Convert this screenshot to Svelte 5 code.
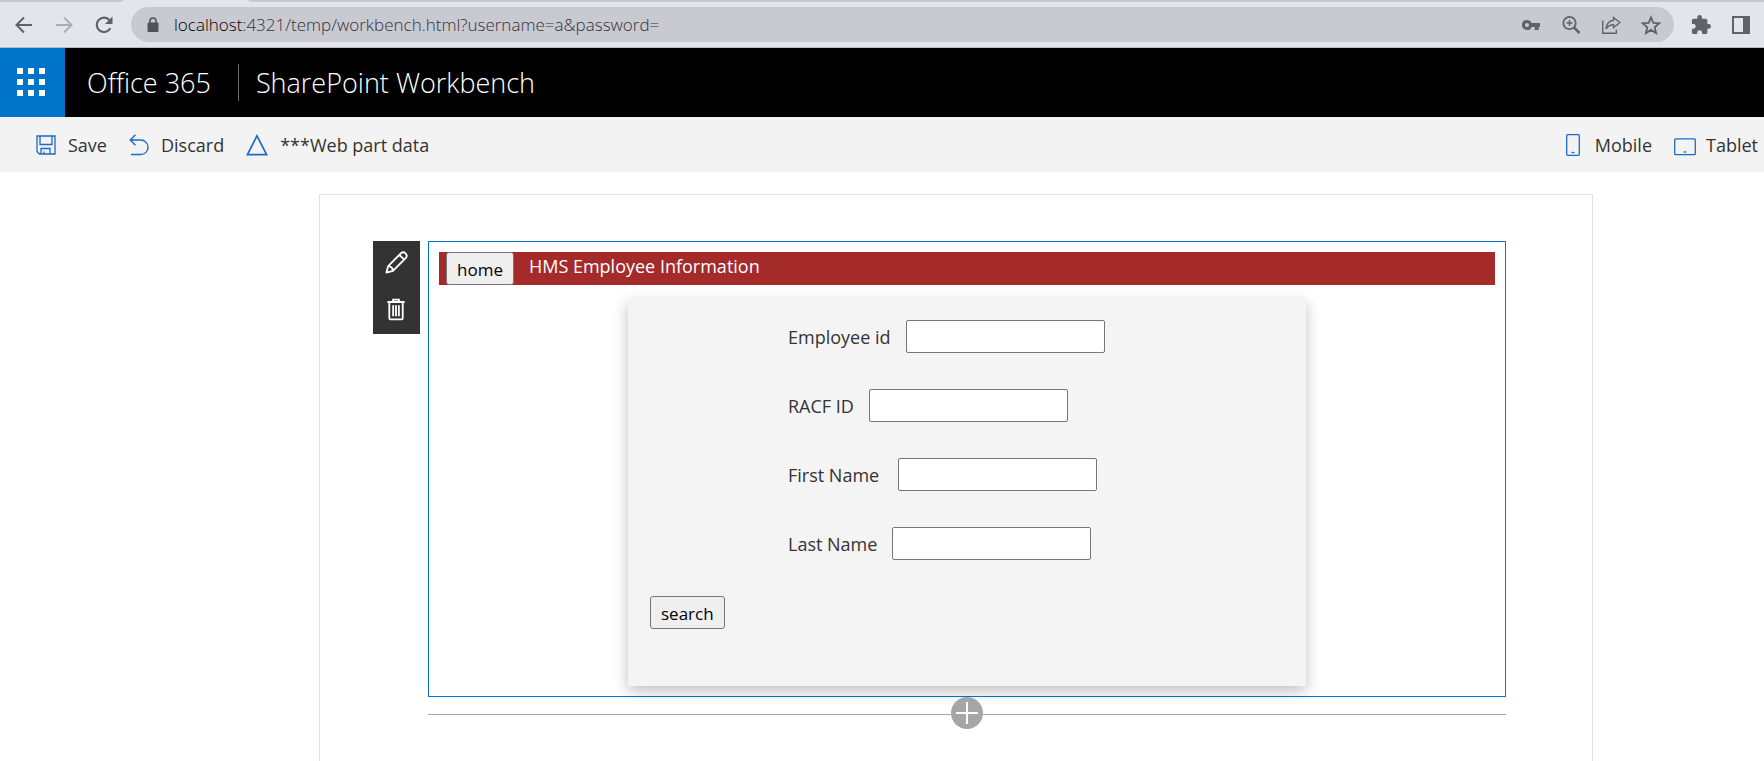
<script>
  const fields = [
    { id: 'employee', label: 'Employee id', wide: false },
    { id: 'racf', label: 'RACF ID', wide: false },
    { id: 'first', label: 'First Name', wide: true },
    { id: 'last', label: 'Last Name', wide: false }
  ];
  const dots = [0, 1, 2, 3, 4, 5, 6, 7, 8];
</script>

<div class="page">
  <div class="browser">
    <div class="tabs"><span class="tab left"></span><span class="tab right"></span></div>
    <div class="nav">
      <button class="icon" aria-label="Back">
        <svg width="20" height="20" viewBox="0 0 20 20" fill="none" stroke="#5f6368" stroke-width="2"><path d="M18 10H3M10 2.5L2.5 10l7.500 7.500" /></svg>
      </button>
      <button class="icon" aria-label="Forward">
        <svg width="20" height="20" viewBox="0 0 20 20" fill="none" stroke="#acacb2" stroke-width="2"><path d="M2 10h15M10 2.500l7.500 7.500-7.500 7.500" /></svg>
      </button>
      <button class="icon" aria-label="Reload">
        <svg width="20" height="20" viewBox="0 0 20 20" fill="none"><path d="M16.300 13.200A7.200 7.200 0 1 1 15.500 5.200" stroke="#5f6368" stroke-width="2.200" /><path d="M18.500 1.500V9H11z" fill="#5f6368" /></svg>
      </button>
      <div class="address">
        <svg width="12" height="16" viewBox="0 0 12 16"><rect x="0.500" y="5.500" width="11" height="9.500" rx="1.200" fill="#505357" /><path d="M3 6V4a3 3 0 0 1 6 0v2" fill="none" stroke="#505357" stroke-width="1.600" /></svg>
        <span class="url"><b>localhost</b>:4321/temp/workbench.html?username=a&amp;password=</span>
        <button class="icon" aria-label="Passwords">
          <svg width="20" height="20" viewBox="0 0 20 20"><path fill="#5f6368" fill-rule="evenodd" d="M6 5a5 5 0 0 1 4.600 3.100H19v3.800h-1.300v3h-4v-3h-3.100A5 5 0 1 1 6 5zm0 3a2 2 0 1 0 0 4 2 2 0 0 0 0-4z" /></svg>
        </button>
        <button class="icon" aria-label="Zoom">
          <svg width="20" height="20" viewBox="0 0 20 20" fill="none" stroke="#5f6368"><circle cx="8.500" cy="8" r="6.200" stroke-width="1.800" /><path d="M5.500 8h6M8.500 5v6" stroke-width="1.500" /><path d="M13 12.500l5.500 5.500" stroke-width="2.500" /></svg>
        </button>
        <button class="icon" aria-label="Share">
          <svg width="20" height="20" viewBox="0 0 20 20" fill="none" stroke="#5f6368" stroke-width="1.400"><path d="M1.700 5.500v12.800h13.600v-3.500" /><path d="M12.500 2.500l6.500 5-6.500 5V9.700C8.500 9.700 6.500 11.500 5 14c.3-4.500 2.800-8 7.500-8.700z" /></svg>
        </button>
        <button class="icon" aria-label="Bookmark">
          <svg width="20" height="20" viewBox="0 0 20 20" fill="none" stroke="#5f6368" stroke-width="1.800"><path d="M10 2.300l2.300 5.500 5.900.5-4.500 3.900 1.400 5.800-5.100-3.100-5.100 3.100 1.400-5.800-4.500-3.900 5.900-.5z" /></svg>
        </button>
      </div>
      <button class="icon" aria-label="Extensions">
        <svg width="20" height="20" viewBox="1 1 22 22"><path fill="#5f6368" d="M20.500 11H19V7c0-1.100-.9-2-2-2h-4V3.500a2.500 2.500 0 0 0-5 0V5H4c-1.100 0-2 .9-2 2v3.800h1.500a2.700 2.700 0 0 1 0 5.400H2V20c0 1.100.9 2 2 2h3.800v-1.500a2.700 2.700 0 0 1 5.400 0V22H17c1.100 0 2-.9 2-2v-4h1.500a2.500 2.500 0 0 0 0-5z" /></svg>
      </button>
      <button class="icon" aria-label="Side panel">
        <svg width="20" height="20" viewBox="0 0 20 20"><path fill="#5f6368" fill-rule="evenodd" d="M1 1h18v18H1zM3 3v14h9V3z" /></svg>
      </button>
    </div>
  </div>

  <header class="suite">
    <button class="waffle" aria-label="App launcher">
      {#each dots as d (d)}<i></i>{/each}
    </button>
    <span class="brand">Office 365</span>
    <span class="product">SharePoint Workbench</span>
  </header>

  <div class="commands">
    <button>
      <svg width="20" height="20" viewBox="0 0 20 20" fill="none" stroke="#1e6ac4" stroke-width="1.300"><path d="M1 1h18v18H3.500L1 16.500zM4 1v8.500h12V1M5 19v-5.500h9V19M8 19v-2.500" /></svg>
      <span>Save</span>
    </button>
    <button>
      <svg width="20" height="22" viewBox="0 0 20 22" fill="none" stroke="#1e6ac4" stroke-width="1.400"><path d="M6.500 .7L1.200 6 6.500 11.300M1.200 6h10.600a7.200 7.200 0 0 1 0 14.500H2" /></svg>
      <span>Discard</span>
    </button>
    <button>
      <svg width="22" height="22" viewBox="0 0 22 22" fill="none" stroke="#1e6ac4" stroke-width="1.700"><path d="M11 1.800L20.600 20.700H1.400z" /></svg>
      <span>***Web part data</span>
    </button>
    <button class="mobile">
      <svg width="14" height="22" viewBox="0 0 14 22" fill="none" stroke="#1e6ac4" stroke-width="1.300"><rect x="0.700" y="0.700" width="12.600" height="20.600" rx="1" /><path d="M5.500 18.500h3" /></svg>
      <span>Mobile</span>
    </button>
    <button class="tablet">
      <svg width="22" height="22" viewBox="0 0 22 22" fill="none" stroke="#1e6ac4" stroke-width="1.300"><rect x="0.700" y="4.900" width="20.600" height="15.800" rx="1" /><path d="M9.500 18h3" /></svg>
      <span>Tablet</span>
    </button>
  </div>

  <main class="canvas">
    <div class="tools">
      <button aria-label="Edit web part">
        <svg width="23" height="23" viewBox="0 0 24 24" fill="none" stroke="#fff" stroke-width="1.900" stroke-linejoin="round"><path d="M1.500 22.500l1.800-6.800L16.800 2.200a3 3 0 0 1 4.300 0l.7.700a3 3 0 0 1 0 4.300L8.300 20.700zM3.300 15.700c2.600 0 5 2.400 5 5M15 4l5 5" /></svg>
      </button>
      <button aria-label="Delete web part">
        <svg width="23" height="23" viewBox="0 0 24 24" fill="none" stroke="#fff" stroke-width="1.900"><path d="M2.500 4.200h18M8.500 4.200v-2.500h6v2.500M4.500 4.200v16.600c0 .8.500 1.500 1.300 1.500h11.400c.8 0 1.300-.7 1.300-1.500V4.200M8.500 7.500v11.500M11.500 7.500v11.500M14.500 7.500v11.500" /></svg>
      </button>
    </div>
    <div class="zone">
      <section class="webpart">
        <div class="titlebar">
          <button class="plain">home</button>
          <h1>HMS Employee Information</h1>
        </div>
        <form class="card" onsubmit={(e) => e.preventDefault()}>
          {#each fields as f (f.id)}
            <div class="field">
              <label for={f.id} class:wide={f.wide}>{f.label}</label>
              <input id={f.id} type="text" />
            </div>
          {/each}
          <button class="plain">search</button>
        </form>
      </section>
      <div class="add">
        <button aria-label="Add a new web part">
          <svg width="22" height="22" viewBox="0 0 22 22" stroke="#fff" stroke-width="2"><path d="M11 0v22M0 11h22" /></svg>
        </button>
      </div>
    </div>
  </main>
</div>

<style>
  :global(body) {
    margin: 0;
    background: #fff;
  }
  .page {
    min-height: 100vh;
    display: flex;
    flex-direction: column;
    font-family: "Open Sans", "Noto Sans", sans-serif;
    font-size: 18px;
    line-height: 24px;
    color: #333;
  }
  .page,
  .page * {
    box-sizing: border-box;
  }
  button {
    font: inherit;
    color: inherit;
    background: none;
    border: 0;
    padding: 0;
    margin: 0;
  }
  svg {
    display: block;
    flex: none;
  }

  .browser {
    background: #e4e4ed;
    border-bottom: 1px solid #b9bcc0;
  }
  .tabs {
    height: 2px;
    display: flex;
    gap: 124px;
  }
  .tab {
    background: #c7c5da;
  }
  .tab.left {
    width: 124px;
    border-bottom-right-radius: 8px 2px;
  }
  .tab.right {
    flex: 1;
    border-bottom-left-radius: 8px 2px;
  }
  .nav {
    display: flex;
    align-items: center;
    gap: 20px;
    padding: 5px 13px 5px 14px;
  }
  .icon {
    width: 20px;
    height: 20px;
  }
  .address {
    flex: 1;
    height: 35px;
    margin: 0 -3px;
    padding: 0 13px 0 16px;
    border-radius: 18px;
    background: #c9c9d2;
    display: flex;
    align-items: center;
    gap: 20px;
  }
  .url {
    flex: 1;
    margin-left: -5px;
    font-size: 17px;
    font-weight: 300;
    color: #303238;
    white-space: nowrap;
  }
  .url b {
    font-weight: 300;
    color: #000;
  }

  .suite {
    height: 69px;
    background: #000;
    color: #fff;
    display: flex;
    align-items: center;
    font-size: 27px;
    font-weight: 300;
    line-height: 37px;
  }
  .waffle {
    width: 65px;
    height: 69px;
    padding: 0 3px 1px 0;
    background: #0074c9;
    display: grid;
    grid-template-columns: repeat(3, 6px);
    gap: 5px;
    place-content: center;
  }
  .waffle i {
    height: 6px;
    background: #fff;
  }
  .brand {
    padding: 0 27px 0 22px;
    border-right: 1px solid #6b6b6b;
  }
  .product {
    padding-left: 17px;
  }

  .commands {
    height: 55px;
    background: #f3f3f3;
    display: flex;
    align-items: center;
    gap: 22px;
    padding: 0 6px 0 36px;
  }
  .commands button {
    display: flex;
    align-items: center;
    gap: 12px;
    white-space: nowrap;
  }
  .commands .mobile {
    margin-left: auto;
    gap: 15px;
  }
  .commands .tablet {
    gap: 10px;
  }

  .canvas {
    flex: 1;
    margin: 22px 171px 0 319px;
    padding: 46px 86px 31px 53px;
    border: 1px solid #e1e1e1;
    border-bottom: 0;
    display: flex;
    align-items: flex-start;
    gap: 8px;
  }
  .tools {
    width: 47px;
    padding-bottom: 4px;
    background: #333;
    display: flex;
    flex-direction: column;
    gap: 5px;
  }
  .tools button {
    height: 42px;
    display: grid;
    place-items: center;
  }
  .zone {
    flex: 1;
  }
  .webpart {
    border: 1px solid #0078d4;
    padding: 10px;
  }
  .titlebar {
    height: 33px;
    background: #a52a2a;
    color: #fff;
    display: flex;
    padding-left: 7px;
    gap: 15px;
  }
  h1 {
    margin: 0;
    font-size: 18px;
    font-weight: 500;
    line-height: 28px;
  }
  .plain {
    height: 33px;
    padding: 2px 10px 0;
    background: #efefef;
    border: 1px solid #767676;
    border-radius: 3px;
    color: #000;
    font-size: 17px;
  }
  .card {
    width: 678px;
    max-width: 100%;
    margin: 14px auto 0;
    padding: 21px 22px 57px;
    background: #f4f4f4;
    box-shadow: 0 5px 14px rgba(0, 0, 0, 0.25);
  }
  .field {
    display: flex;
    align-items: center;
    gap: 15px;
    margin-bottom: 36px;
    padding-left: 138px;
  }
  .field .wide {
    padding-right: 4px;
  }
  input {
    width: 199px;
    height: 33px;
    padding: 0 4px;
    border: 1px solid #767676;
    border-radius: 2px;
    background: #fff;
    font: inherit;
  }
  .add {
    display: flex;
    align-items: center;
  }
  .add::before,
  .add::after {
    content: "";
    flex: 1;
    height: 1px;
    margin-top: 3px;
    background: #a6a6a6;
  }
  .add button {
    width: 32px;
    height: 32px;
    border-radius: 50%;
    background: #a6a6a6;
    display: grid;
    place-items: center;
  }
</style>
